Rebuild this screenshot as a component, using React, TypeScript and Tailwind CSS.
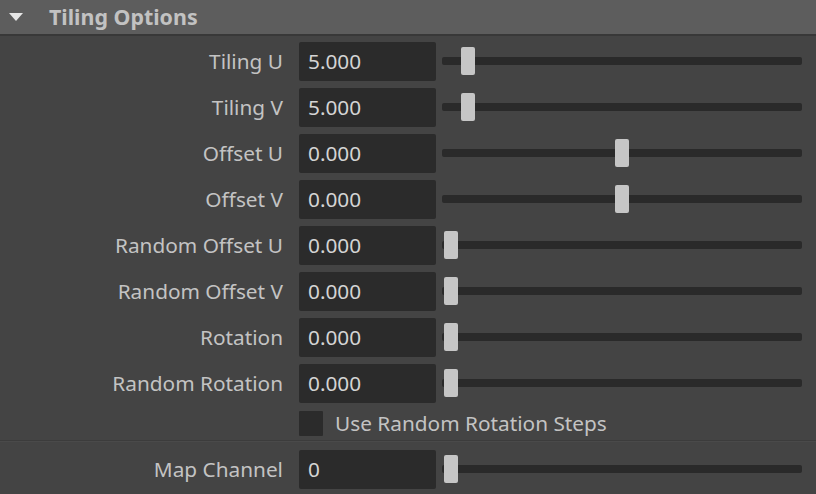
const rows = [
  { label: "Tiling U", value: "5.000", thumb: 19 },
  { label: "Tiling V", value: "5.000", thumb: 19 },
  { label: "Offset U", value: "0.000", thumb: 173 },
  { label: "Offset V", value: "0.000", thumb: 173 },
  { label: "Random Offset U", value: "0.000", thumb: 2 },
  { label: "Random Offset V", value: "0.000", thumb: 2 },
  { label: "Rotation", value: "0.000", thumb: 2 },
  { label: "Random Rotation", value: "0.000", thumb: 2 },
];

function Slider({ thumb }: { thumb: number }) {
  return (
    <div className="relative ml-[6px] h-[28px] w-[360px]">
      <div className="absolute left-0 right-0 top-[10px] h-[8px] rounded-[2px] bg-[#2a2a2a]" />
      <div
        className="absolute top-0 h-[28px] w-[14px] rounded-[2px] bg-[#c6c6c6]"
        style={{ left: thumb }}
      />
    </div>
  );
}

function Row({ label, value, thumb }: { label: string; value: string; thumb: number }) {
  return (
    <div className="flex h-[46px] items-center">
      <div className="w-[284px] pr-[1px] text-right text-[#c3c3c3]">{label}</div>
      <div className="ml-[15px] flex h-[39px] w-[137px] items-center rounded-[2px] bg-[#2b2b2b] pl-[9px] text-[#d4d4d4]">
        {value}
      </div>
      <Slider thumb={thumb} />
    </div>
  );
}

export default function App() {
  return (
    <div
      className="h-[494px] w-[816px] overflow-hidden bg-[#444444] text-[20.8px] leading-none"
      style={{ fontFamily: '"Noto Sans", "Open Sans", sans-serif' }}
    >
      <div className="flex h-[34px] items-center bg-[#5d5d5d]">
        <svg width="14" height="9" viewBox="0 0 14 9" className="ml-[9px]">
          <polygon points="0,0 14,0 7,8" fill="#e6e6e6" />
        </svg>
        <span className="ml-[26px] text-[21.4px] font-bold text-[#c2c2c2]">Tiling Options</span>
      </div>
      <div className="h-[2px] bg-[#383838]" />
      <div className="pt-[2px]">
        {rows.map((r) => (
          <Row key={r.label} {...r} />
        ))}
      </div>
      <div className="flex h-[34px] items-center">
        <div className="ml-[299px] h-[25px] w-[24px] rounded-[1px] bg-[#2b2b2b]" />
        <span className="ml-[12px] text-[#c3c3c3]">Use Random Rotation Steps</span>
      </div>
      <div className="h-[1px] bg-[#3c3c3c]" />
      <div className="h-[1px] bg-[#4a4a4a]" />
      <div className="pt-[4px]">
        <Row label="Map Channel" value="0" thumb={2} />
      </div>
    </div>
  );
}
